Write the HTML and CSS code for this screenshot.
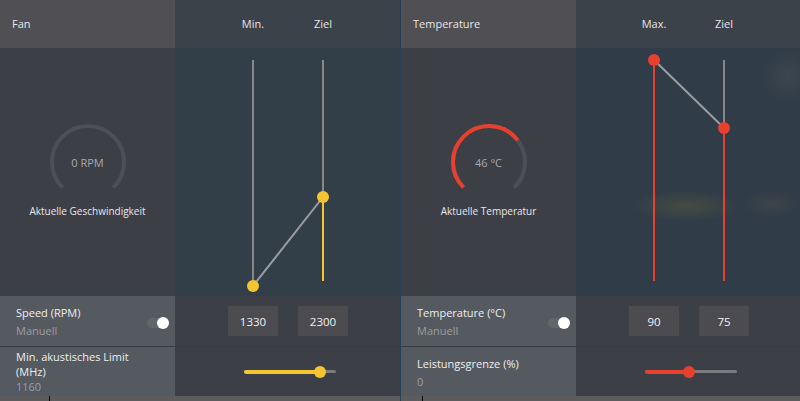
FILE: index.html
```html
<!DOCTYPE html>
<html>
<head>
<meta charset="utf-8">
<link rel="stylesheet" href="styles.css">
</head>
<body>
<div class="app">
  <section class="panel">
    <div class="head-l">Fan</div>
    <div class="head-r"><span class="hl">Min.</span><span class="hl">Ziel</span></div>
    <div class="chart-l">
      <svg class="gauge" width="80" height="80" viewBox="0 0 80 80">
        <circle cx="40" cy="40" r="36" fill="none" stroke="#4c4f56" stroke-width="4" stroke-dasharray="169.6 300" transform="rotate(135 40 40)"/>
      </svg>
      <div class="gauge-val">0 RPM</div>
      <div class="gauge-label">Aktuelle Geschwindigkeit</div>
    </div>
    <div class="chart-r">
      <svg width="225" height="248" viewBox="0 0 225 248">
        <line x1="78" y1="12" x2="78" y2="238" stroke="#85888c" stroke-width="2"/>
        <line x1="148" y1="12" x2="148" y2="149" stroke="#85888c" stroke-width="2"/>
        <line x1="148" y1="149" x2="148" y2="233" stroke="#f5c432" stroke-width="2"/>
        <line x1="78" y1="238" x2="148" y2="149" stroke="#9a9ea3" stroke-width="2"/>
        <circle cx="78" cy="238" r="6" fill="#f5c432"/>
        <circle cx="148" cy="149" r="6" fill="#f5c432"/>
      </svg>
    </div>
    <div class="row-l">
      <div class="txt">
        <div class="t1">Speed (RPM)</div>
        <div class="t2">Manuell</div>
      </div>
      <div class="toggle"><span class="knob"></span></div>
    </div>
    <div class="row-r">
      <div class="inputs"><span class="box">1330</span><span class="box">2300</span></div>
    </div>
    <div class="row-l row2 tall">
      <div class="txt">
        <div class="t1 wrap">Min. akustisches Limit<br>(MHz)</div>
        <div class="t2 blue">1160</div>
      </div>
    </div>
    <div class="row-r row2">
      <div class="slider yellow"><span class="fill" style="width:76px"></span><span class="thumb" style="left:76px"></span></div>
    </div>
    <div class="strip"><span class="tick t49"></span></div>
  </section>
  <div class="divider"></div>
  <section class="panel">
    <div class="head-l">Temperature</div>
    <div class="head-r"><span class="hl">Max.</span><span class="hl">Ziel</span></div>
    <div class="chart-l">
      <svg class="gauge" width="80" height="80" viewBox="0 0 80 80">
        <circle cx="40" cy="40" r="36" fill="none" stroke="#4c4f56" stroke-width="4" stroke-dasharray="169.6 300" transform="rotate(135 40 40)"/>
        <circle cx="40" cy="40" r="36" fill="none" stroke="#e8402f" stroke-width="4" stroke-dasharray="118 300" transform="rotate(135 40 40)"/>
      </svg>
      <div class="gauge-val">46 °C</div>
      <div class="gauge-label">Aktuelle Temperatur</div>
    </div>
    <div class="chart-r blurbg">
      <svg width="224" height="248" viewBox="0 0 224 248">
        <line x1="78" y1="12" x2="78" y2="233" stroke="#e8402f" stroke-width="2"/>
        <line x1="148" y1="12" x2="148" y2="80" stroke="#85888c" stroke-width="2"/>
        <line x1="148" y1="80" x2="148" y2="233" stroke="#e8402f" stroke-width="2"/>
        <line x1="78" y1="12" x2="148" y2="80" stroke="#9a9ea3" stroke-width="2"/>
        <circle cx="78" cy="12" r="6" fill="#e8402f"/>
        <circle cx="148" cy="80" r="6" fill="#e8402f"/>
      </svg>
    </div>
    <div class="row-l">
      <div class="txt">
        <div class="t1">Temperature (°C)</div>
        <div class="t2">Manuell</div>
      </div>
      <div class="toggle"><span class="knob"></span></div>
    </div>
    <div class="row-r">
      <div class="inputs"><span class="box">90</span><span class="box">75</span></div>
    </div>
    <div class="row-l row2">
      <div class="txt">
        <div class="t1">Leistungsgrenze (%)</div>
        <div class="t2">0</div>
      </div>
    </div>
    <div class="row-r row2">
      <div class="slider red"><span class="fill" style="width:44px"></span><span class="thumb" style="left:44px"></span></div>
    </div>
    <div class="strip"><span class="tick t21"></span></div>
  </section>
</div>
</body>
</html>
```
FILE: styles.css
```css
html, body {
  margin: 0;
  padding: 0;
}
body {
  width: 800px;
  height: 401px;
  overflow: hidden;
  background: #2b3e4f;
  font-family: "Open Sans", "Liberation Sans", sans-serif;
  font-size: 11px;
  color: #e6e6e8;
}
.app {
  display: flex;
  width: 800px;
  height: 401px;
}
.divider {
  width: 1px;
  background: #2a3f51;
}
.panel {
  flex: 0 0 auto;
  width: 400px;
  display: grid;
  grid-template-columns: 175px 1fr;
  grid-template-rows: 48px 248px 50px 50px 5px;
}
.panel:last-child {
  width: 399px;
}
.head-l {
  background: #504f53;
  padding-left: 12px;
  padding-bottom: 2px;
  display: flex;
  align-items: center;
}
.head-r {
  background: #3c4249;
  display: flex;
  align-items: center;
  padding-left: 58px;
  padding-bottom: 2px;
}
.hl {
  width: 40px;
  text-align: center;
  margin-right: 30px;
}
.chart-l {
  background: #3c3f46;
  display: flex;
  flex-direction: column;
  align-items: center;
  padding-top: 74px;
  position: relative;
}
.gauge {
  display: block;
}
.gauge-val {
  position: absolute;
  top: 107px;
  left: 0;
  right: 0;
  text-align: center;
  color: #a8a9ad;
  font-size: 11px;
}
.gauge-label {
  margin-top: 2px;
  font-size: 10px;
  color: #e8e8ea;
}
.chart-r {
  background: #323e48;
}
.chart-r svg {
  display: block;
}
.blurbg {
  background:
    radial-gradient(ellipse 55px 16px at 110px 158px, rgba(120,110,60,0.3), rgba(120,110,60,0) 100%),
    radial-gradient(ellipse 28px 14px at 195px 156px, rgba(90,90,80,0.3), rgba(90,90,80,0) 100%),
    radial-gradient(ellipse 26px 26px at 212px 28px, rgba(90,95,100,0.3), rgba(90,95,100,0) 100%),
    #303c47;
}
.row-l {
  background: #555960;
  display: flex;
  align-items: center;
  justify-content: space-between;
  padding: 3px 8px 0 16px;
}
.row-l.tall {
  padding-top: 1px;
}
.row-r {
  background: #3c3f46;
  display: flex;
  align-items: center;
}
.row2 {
  border-top: 1px solid #383c43;
}
.txt {
  display: flex;
  flex-direction: column;
}
.t1 {
  font-size: 11px;
  line-height: 13px;
  color: #eeeef0;
}
.t1.wrap {
  line-height: 15px;
}
.t2 {
  font-size: 11px;
  line-height: 16px;
  margin-top: 4px;
  color: #9d9ea2;
}
.tall .t2 {
  margin-top: 0;
}
.t2.blue {
  color: #92a1b4;
}
.toggle {
  width: 20px;
  height: 10px;
  border-radius: 5px;
  background: #62666c;
  position: relative;
}
.knob {
  position: absolute;
  right: -2px;
  top: -1px;
  width: 12px;
  height: 12px;
  border-radius: 50%;
  background: #ffffff;
}
.inputs {
  display: flex;
  gap: 20px;
  padding-left: 53px;
}
.box {
  width: 50px;
  height: 30px;
  background: #4b4b50;
  display: flex;
  align-items: center;
  justify-content: center;
  font-size: 11.5px;
  color: #f2f2f2;
}
.slider {
  position: relative;
  margin-left: 69px;
  width: 92px;
  height: 3px;
  background: #7a7b7e;
  border-radius: 2px;
}
.fill {
  position: absolute;
  left: 0;
  top: -0.5px;
  height: 4px;
  border-radius: 2px;
}
.thumb {
  position: absolute;
  top: -4.5px;
  width: 12px;
  height: 12px;
  margin-left: -6px;
  border-radius: 50%;
}
.yellow .fill, .yellow .thumb {
  background: #f5c432;
}
.red .fill, .red .thumb {
  background: #e8402f;
}
.strip {
  grid-column: 1 / -1;
  background: #5c5c5e;
  position: relative;
}
.tick {
  position: absolute;
  top: 0;
  bottom: 0;
  width: 1px;
  background: #000;
}
.t49 { left: 49px; }
.t21 { left: 21px; }
```
